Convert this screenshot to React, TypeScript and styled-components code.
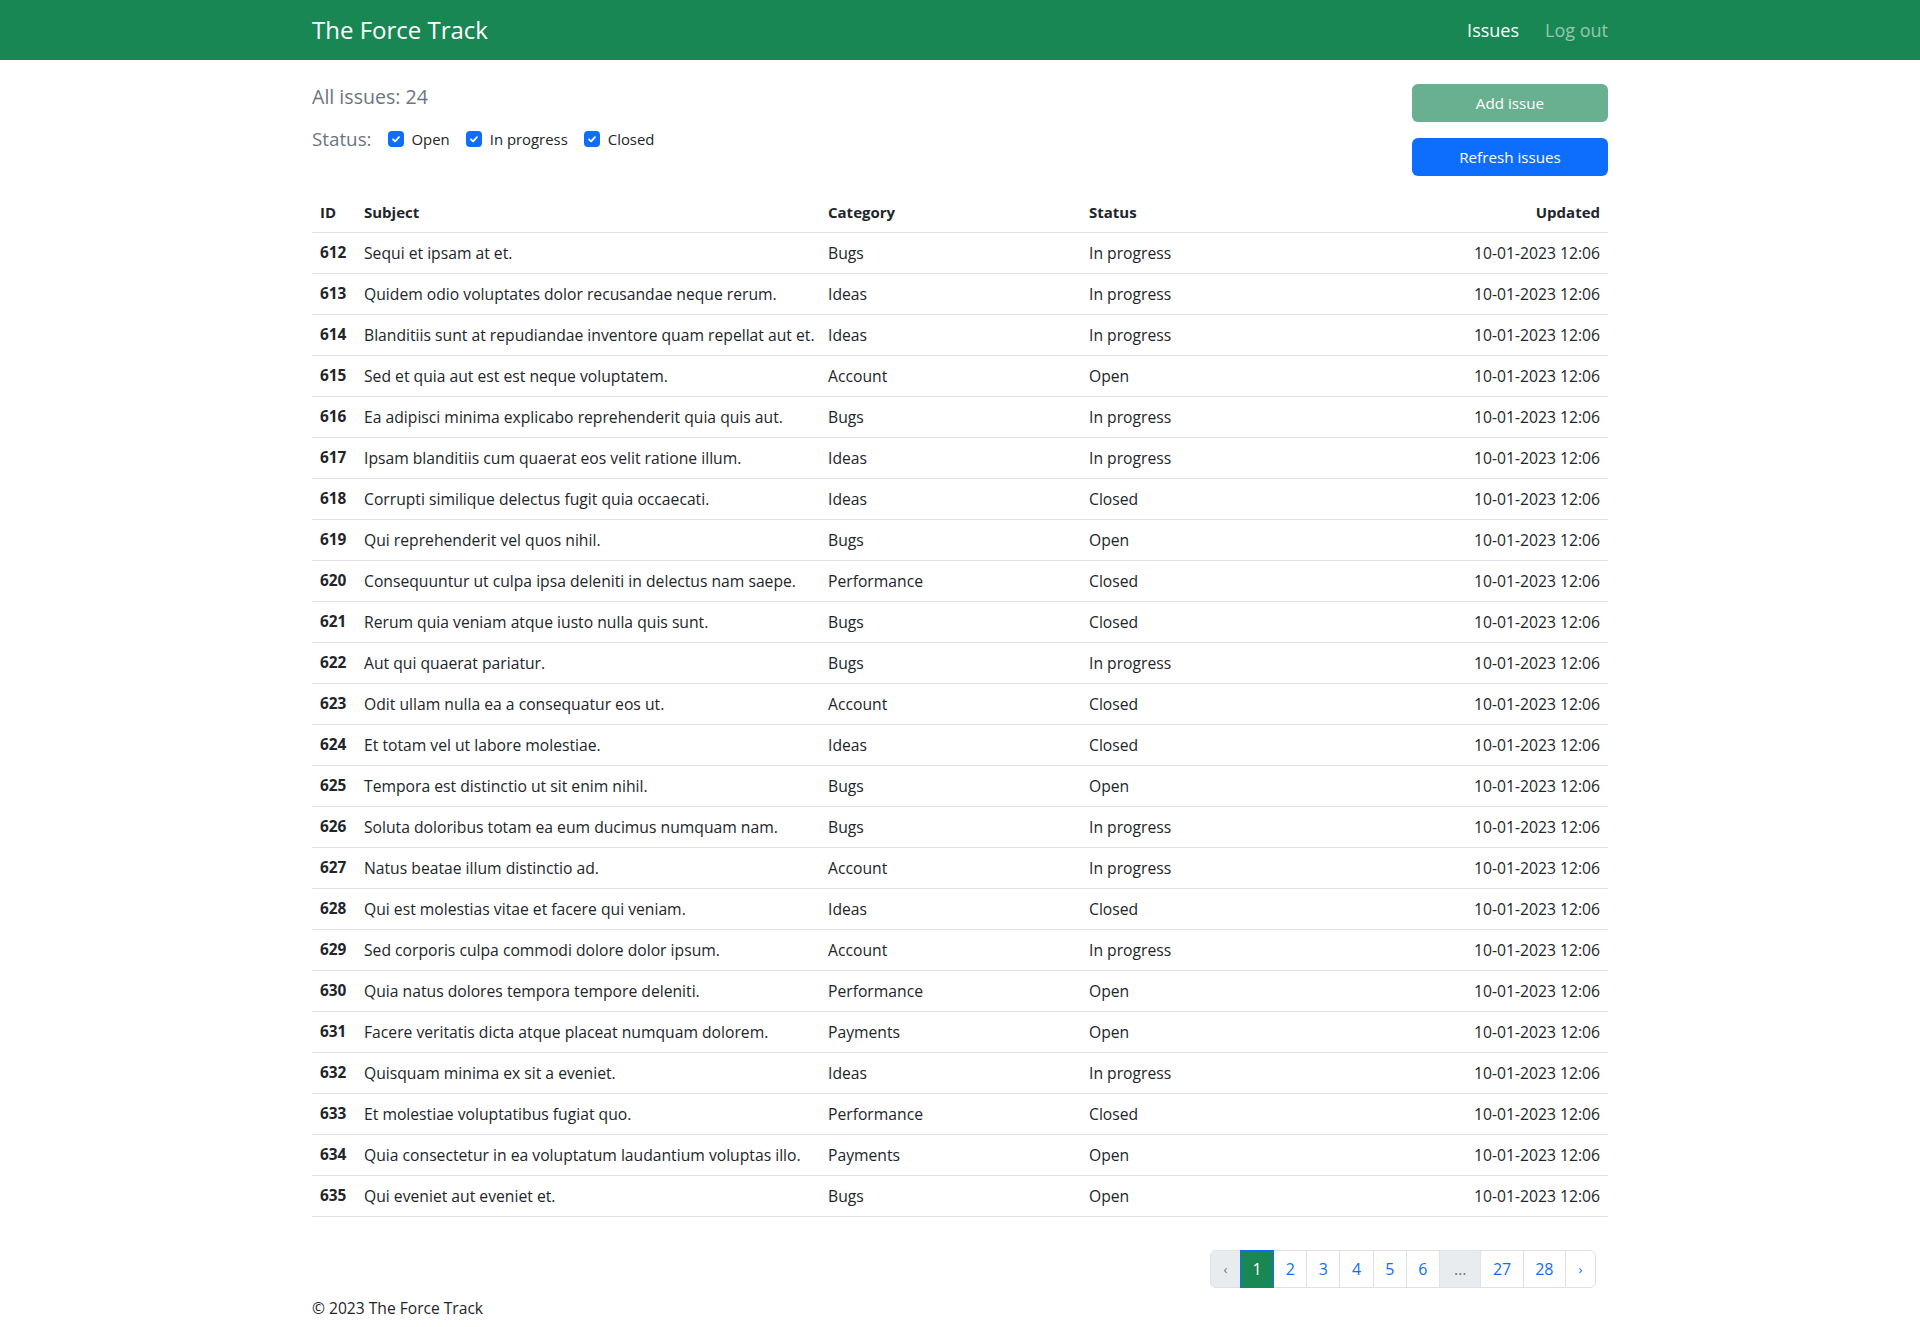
import styled, { createGlobalStyle } from 'styled-components'

// ── palette ───────────────────────────────────────────────
const C = {
  green: '#198754',
  blue: '#0d6efd',
  text: '#212529',
  muted: '#6c757d',
  border: '#dee2e6',
  light: '#e9ecef',
}

const GlobalStyle = createGlobalStyle`
  * { box-sizing: border-box; }
  body {
    margin: 0;
    font-family: 'Open Sans', 'Noto Sans', sans-serif;
    font-size: 16px;
    line-height: 1.5;
    color: ${C.text};
    background: #fff;
  }
`

const Container = styled.div`
  width: 1320px;
  margin: 0 auto;
  padding: 0 12px;
`

// ── navbar ────────────────────────────────────────────────
const Navbar = styled.nav`
  height: 60px;
  background: ${C.green};
`

const NavInner = styled(Container)`
  height: 100%;
  display: flex;
  align-items: center;
  justify-content: space-between;
`

const Brand = styled.a`
  color: #fff;
  font-size: 24px;
  line-height: 1;
  text-decoration: none;
`

const NavLinks = styled.div`
  display: flex;
  align-items: center;
  gap: 26px;
`

const NavLink = styled.a<{ $active?: boolean }>`
  font-size: 18px;
  font-weight: ${(p) => (p.$active ? 500 : 400)};
  color: ${(p) => (p.$active ? '#fff' : 'rgba(255, 255, 255, 0.55)')};
  text-decoration: none;
`

// ── header area ───────────────────────────────────────────
const Main = styled(Container)`
  padding-top: 24px;
`

const TopRow = styled.div`
  display: flex;
  justify-content: space-between;
  align-items: flex-start;
`

const Title = styled.h5`
  margin: 1px 0 0;
  font-size: 19.6px;
  font-weight: 400;
  line-height: 24px;
  color: ${C.muted};
`

const StatusRow = styled.div`
  display: flex;
  align-items: center;
  height: 27px;
  margin-top: 17px;
`

const StatusLabel = styled.span`
  font-size: 18.8px;
  color: ${C.muted};
  margin-right: 16px;
`

const CheckItem = styled.label`
  display: inline-flex;
  align-items: center;
  gap: 8px;
  margin-right: 16px;
  font-size: 14.9px;
  color: ${C.text};
`

const CheckBox = styled.span`
  width: 16px;
  height: 16px;
  border-radius: 4px;
  background: ${C.blue};
  display: inline-flex;
  align-items: center;
  justify-content: center;
`

const ButtonStack = styled.div`
  display: flex;
  flex-direction: column;
  gap: 16px;
  width: 196px;
`

const Button = styled.button<{ $variant: 'success' | 'primary'; $disabled?: boolean }>`
  height: 38px;
  border: none;
  border-radius: 6px;
  font-family: inherit;
  font-size: 15.2px;
  color: #fff;
  background: ${(p) => (p.$variant === 'success' ? C.green : C.blue)};
  opacity: ${(p) => (p.$disabled ? 0.65 : 1)};
  cursor: pointer;
`

// ── table ─────────────────────────────────────────────────
const Table = styled.table`
  width: 100%;
  margin-top: 16px;
  border-collapse: collapse;
  table-layout: fixed;
`

const Th = styled.th<{ $right?: boolean }>`
  padding: 8px;
  text-align: ${(p) => (p.$right ? 'right' : 'left')};
  font-weight: 700;
  font-size: 15px;
  line-height: 24px;
  border-bottom: 1px solid ${C.border};
`

const Td = styled.td<{ $right?: boolean; $bold?: boolean }>`
  padding: 8px;
  text-align: ${(p) => (p.$right ? 'right' : 'left')};
  font-weight: ${(p) => (p.$bold ? 700 : 400)};
  font-size: ${(p) => (p.$bold ? '15.4px' : '15.7px')};
  line-height: 24px;
  border-bottom: 1px solid ${C.border};
  white-space: nowrap;
`

// ── pagination ────────────────────────────────────────────
const PagerNav = styled.nav`
  display: flex;
  justify-content: flex-end;
  margin-top: 33px;
  padding-right: 12px;
`

const Pager = styled.ul`
  display: flex;
  list-style: none;
  margin: 0;
  padding: 0;
`

const PageLink = styled.a<{ $active?: boolean; $muted?: boolean; $small?: boolean; $wide?: boolean }>`
  display: block;
  padding: 6px ${(p) => (p.$wide ? '14px' : '11.5px')};
  line-height: 24px;
  font-size: ${(p) => (p.$small ? '13px' : '16px')};
  min-width: ${(p) => (p.$small ? '31px' : 'auto')};
  text-align: center;
  text-decoration: none;
  margin-left: -1px;
  border: 1px solid ${(p) => (p.$active ? C.blue : C.border)};
  background: ${(p) => (p.$active ? C.green : p.$muted ? C.light : '#fff')};
  color: ${(p) => (p.$active ? '#fff' : p.$muted ? C.muted : C.blue)};
  position: ${(p) => (p.$active ? 'relative' : 'static')};
  z-index: ${(p) => (p.$active ? 2 : 'auto')};

  li:first-child > & {
    margin-left: 0;
    border-radius: 6px 0 0 6px;
  }
  li:last-child > & {
    border-radius: 0 6px 6px 0;
  }
`

const Footer = styled(Container)`
  padding-top: 8px;
  padding-bottom: 8px;
  font-size: 15.6px;
  line-height: 24px;
`

// ── data ──────────────────────────────────────────────────
const ISSUES: [number, string, string, string][] = [
  [612, 'Sequi et ipsam at et.', 'Bugs', 'In progress'],
  [613, 'Quidem odio voluptates dolor recusandae neque rerum.', 'Ideas', 'In progress'],
  [614, 'Blanditiis sunt at repudiandae inventore quam repellat aut et.', 'Ideas', 'In progress'],
  [615, 'Sed et quia aut est est neque voluptatem.', 'Account', 'Open'],
  [616, 'Ea adipisci minima explicabo reprehenderit quia quis aut.', 'Bugs', 'In progress'],
  [617, 'Ipsam blanditiis cum quaerat eos velit ratione illum.', 'Ideas', 'In progress'],
  [618, 'Corrupti similique delectus fugit quia occaecati.', 'Ideas', 'Closed'],
  [619, 'Qui reprehenderit vel quos nihil.', 'Bugs', 'Open'],
  [620, 'Consequuntur ut culpa ipsa deleniti in delectus nam saepe.', 'Performance', 'Closed'],
  [621, 'Rerum quia veniam atque iusto nulla quis sunt.', 'Bugs', 'Closed'],
  [622, 'Aut qui quaerat pariatur.', 'Bugs', 'In progress'],
  [623, 'Odit ullam nulla ea a consequatur eos ut.', 'Account', 'Closed'],
  [624, 'Et totam vel ut labore molestiae.', 'Ideas', 'Closed'],
  [625, 'Tempora est distinctio ut sit enim nihil.', 'Bugs', 'Open'],
  [626, 'Soluta doloribus totam ea eum ducimus numquam nam.', 'Bugs', 'In progress'],
  [627, 'Natus beatae illum distinctio ad.', 'Account', 'In progress'],
  [628, 'Qui est molestias vitae et facere qui veniam.', 'Ideas', 'Closed'],
  [629, 'Sed corporis culpa commodi dolore dolor ipsum.', 'Account', 'In progress'],
  [630, 'Quia natus dolores tempora tempore deleniti.', 'Performance', 'Open'],
  [631, 'Facere veritatis dicta atque placeat numquam dolorem.', 'Payments', 'Open'],
  [632, 'Quisquam minima ex sit a eveniet.', 'Ideas', 'In progress'],
  [633, 'Et molestiae voluptatibus fugiat quo.', 'Performance', 'Closed'],
  [634, 'Quia consectetur in ea voluptatum laudantium voluptas illo.', 'Payments', 'Open'],
  [635, 'Qui eveniet aut eveniet et.', 'Bugs', 'Open'],
]

const PAGES = ['1', '2', '3', '4', '5', '6', '…', '27', '28']

function Check({ label }: { label: string }) {
  return (
    <CheckItem>
      <CheckBox>
        <svg width="12" height="12" viewBox="0 0 20 20">
          <path d="M5 10.5l3.5 3.5l6.5-7" fill="none" stroke="#fff" strokeWidth="3" strokeLinecap="round" strokeLinejoin="round" />
        </svg>
      </CheckBox>
      {label}
    </CheckItem>
  )
}

export default function App() {
  return (
    <>
      <GlobalStyle />
      <Navbar>
        <NavInner>
          <Brand href="#">The Force Track</Brand>
          <NavLinks>
            <NavLink href="#" $active>Issues</NavLink>
            <NavLink href="#">Log out</NavLink>
          </NavLinks>
        </NavInner>
      </Navbar>

      <Main>
        <TopRow>
          <div>
            <Title>All issues: 24</Title>
            <StatusRow>
              <StatusLabel>Status:</StatusLabel>
              <Check label="Open" />
              <Check label="In progress" />
              <Check label="Closed" />
            </StatusRow>
          </div>
          <ButtonStack>
            <Button $variant="success" $disabled>Add issue</Button>
            <Button $variant="primary">Refresh issues</Button>
          </ButtonStack>
        </TopRow>

        <Table>
          <colgroup>
            <col style={{ width: 44 }} />
            <col style={{ width: 464 }} />
            <col style={{ width: 261 }} />
            <col style={{ width: 263 }} />
            <col />
          </colgroup>
          <thead>
            <tr>
              <Th>ID</Th>
              <Th>Subject</Th>
              <Th>Category</Th>
              <Th>Status</Th>
              <Th $right>Updated</Th>
            </tr>
          </thead>
          <tbody>
            {ISSUES.map(([id, subject, category, status]) => (
              <tr key={id}>
                <Td $bold>{id}</Td>
                <Td>{subject}</Td>
                <Td>{category}</Td>
                <Td>{status}</Td>
                <Td $right>10-01-2023 12:06</Td>
              </tr>
            ))}
          </tbody>
        </Table>

        <PagerNav>
          <Pager>
            <li>
              <PageLink $muted $small>‹</PageLink>
            </li>
            {PAGES.map((p) => (
              <li key={p}>
                <PageLink href="#" $active={p === '1'} $muted={p === '…'} $wide={p === '…'}>
                  {p}
                </PageLink>
              </li>
            ))}
            <li>
              <PageLink href="#" $small>›</PageLink>
            </li>
          </Pager>
        </PagerNav>
      </Main>

      <Footer>© 2023 The Force Track</Footer>
    </>
  )
}
